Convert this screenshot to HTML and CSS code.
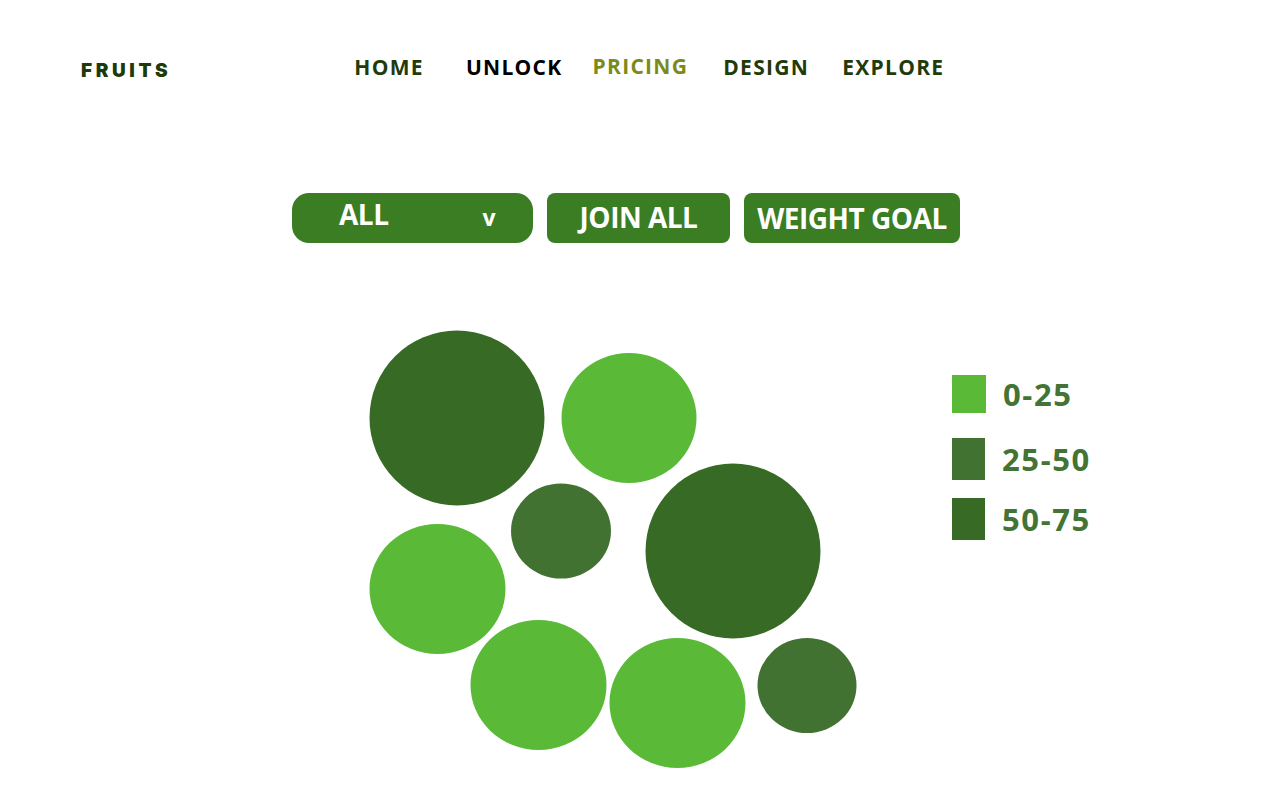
FILE: index.html
```html
<!DOCTYPE html>
<html lang="en">
<head>
<meta charset="utf-8">
<title>Fruits</title>
<link rel="stylesheet" href="styles.css">
</head>
<body>
<header class="header">
  <div class="logo">FRUITS</div>
  <nav class="nav">
    <a class="nav-link nav-home" href="#">HOME</a>
    <a class="nav-link nav-black" href="#">UNLOCK</a>
    <a class="nav-link nav-active" href="#">PRICING</a>
    <a class="nav-link" href="#">DESIGN</a>
    <a class="nav-link" href="#">EXPLORE</a>
  </nav>
</header>
<main class="main">
  <div class="controls">
    <button class="btn btn-select"><span>ALL</span><span class="caret">v</span></button>
    <button class="btn btn-join">JOIN ALL</button>
    <button class="btn btn-goal">WEIGHT GOAL</button>
  </div>
  <div class="chart-row">
    <svg class="bubbles" width="510" height="460" viewBox="0 0 510 460">
      <circle cx="97" cy="98" r="87.5" fill="#376a25"/>
      <ellipse cx="269" cy="98" rx="67.5" ry="65" fill="#5aba38"/>
      <ellipse cx="201" cy="211" rx="50" ry="47.5" fill="#427232"/>
      <circle cx="373" cy="231" r="87.5" fill="#376a25"/>
      <ellipse cx="77.5" cy="269" rx="68" ry="65" fill="#5aba38"/>
      <ellipse cx="178.5" cy="365" rx="68" ry="65" fill="#5aba38"/>
      <ellipse cx="317.5" cy="383" rx="68" ry="65" fill="#5aba38"/>
      <ellipse cx="447" cy="365.5" rx="49.5" ry="47.5" fill="#427232"/>
    </svg>
    <ul class="legend">
      <li class="legend-item item-1"><span class="swatch sw-light"></span><span class="legend-label">0-25</span></li>
      <li class="legend-item item-2"><span class="swatch sw-mid"></span><span class="legend-label">25-50</span></li>
      <li class="legend-item item-3"><span class="swatch sw-dark"></span><span class="legend-label">50-75</span></li>
    </ul>
  </div>
</main>
</body>
</html>
```
FILE: styles.css
```css
* { box-sizing: border-box; }
html, body { margin: 0; padding: 0; background: #ffffff; }
body {
  width: 1280px;
  height: 800px;
  overflow: hidden;
  font-family: "Open Sans", "Liberation Sans", sans-serif;
}

.header {
  display: flex;
  align-items: flex-start;
  padding: 53px 0 0 81px;
  height: 193px;
}
.logo {
  font-family: "Inter", "Open Sans", sans-serif;
  font-weight: 900;
  font-size: 19px;
  letter-spacing: 3.6px;
  color: #1d3b08;
  margin-top: 6px;
  line-height: 24px;
}
.nav {
  display: flex;
  gap: 33px;
  margin-left: 183px;
}
.nav-link {
  font-family: "Open Sans", sans-serif;
  font-weight: 700;
  font-size: 21px;
  letter-spacing: 1.3px;
  line-height: 28px;
  color: #1f3b0a;
  text-decoration: none;
}
.nav-home { margin-right: 9px; }
.nav-black { color: #000000; }
.nav-active { color: #7c8a1a; margin-top: -1px; margin-left: -3px; margin-right: 2px; }

.main { padding-left: 292px; }
.controls {
  display: flex;
  gap: 14px;
  height: 50px;
}
.btn {
  border: none;
  background: #3a7d23;
  color: #ffffff;
  font-family: "Open Sans", sans-serif;
  font-weight: 700;
  font-size: 28px;
  letter-spacing: -0.5px;
  height: 50px;
  padding: 0;
  display: flex;
  align-items: center;
  justify-content: center;
}
.btn-select {
  width: 241px;
  border-radius: 17px;
  justify-content: flex-start;
  padding-left: 47px;
  align-items: flex-start;
  padding-top: 2px;
}
.caret {
  font-size: 23px;
  margin-left: 94px;
  margin-top: 6px;
}
.btn-join { width: 183px; border-radius: 8px; padding-bottom: 3px; }
.btn-goal { width: 216px; border-radius: 8px; }

.chart-row {
  display: flex;
  margin-top: 77px;
}
.bubbles {
  display: block;
  margin-left: 68px;
}
.legend {
  list-style: none;
  margin: 55px 0 0 82px;
  padding: 0;
}
.legend-item {
  display: flex;
  align-items: center;
}
.swatch { display: block; width: 34px; }
.item-1 .swatch { height: 38px; }
.item-2 { margin-top: 25px; }
.item-2 .swatch { height: 42px; width: 33px; }
.item-3 { margin-top: 18px; }
.item-3 .swatch { height: 42px; width: 33px; }
.sw-light { background: #5aba38; }
.sw-mid { background: #427232; }
.sw-dark { background: #376a25; }
.legend-label {
  font-family: "Open Sans", sans-serif;
  font-weight: 700;
  font-size: 31px;
  letter-spacing: 1.6px;
  color: #437434;
  margin-left: 17px;
  line-height: 38px;
}
```
